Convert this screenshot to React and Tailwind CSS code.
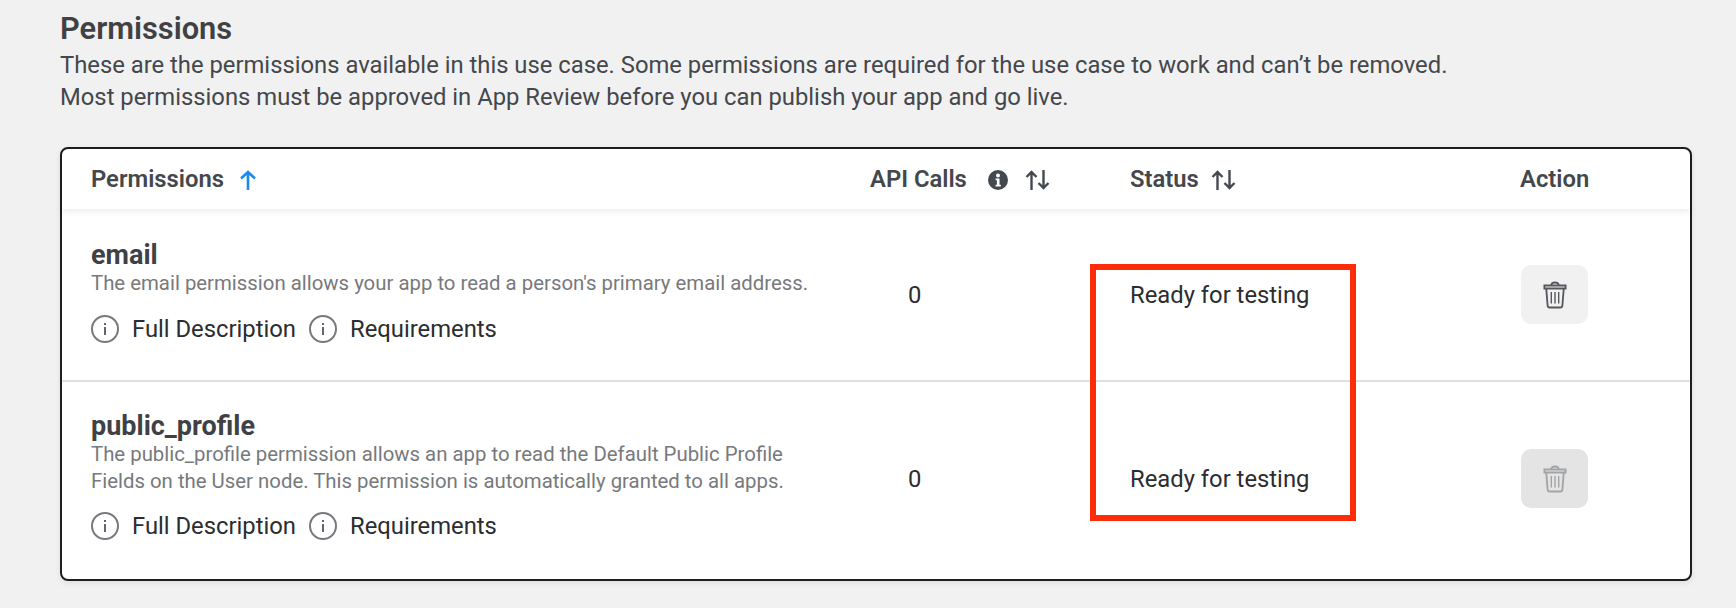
import React from "react";

const font = { fontFamily: "Roboto, sans-serif" };

function InfoOutline() {
  return (
    <svg width="28" height="28" viewBox="0 0 28 28" fill="none" className="shrink-0">
      <circle cx="14" cy="14" r="13" stroke="#77797c" strokeWidth="2" />
      <rect x="13" y="12" width="2" height="8" fill="#606770" />
      <rect x="13" y="8" width="2" height="2" fill="#606770" />
    </svg>
  );
}

function InfoFilled() {
  return (
    <svg width="20" height="20" viewBox="0 0 20 20">
      <circle cx="10" cy="10" r="10" fill="#444950" />
      <circle cx="10" cy="5.4" r="2" fill="#fff" />
      <path d="M7.6 8.6h3.9v6.2h1.3v1.6H7.6v-1.6h1.3v-4.6H7.6z" fill="#fff" />
    </svg>
  );
}

function SortArrows() {
  return (
    <svg width="25" height="22" viewBox="0 0 25 22" fill="none" stroke="#444950" strokeWidth="2.4">
      <path d="M6.500 21V3M1.500 8 6.500 3l5 5" />
      <path d="M18.500 1v18M13.500 14l5 5 5-5" />
    </svg>
  );
}

function ArrowUp() {
  return (
    <svg width="20" height="22" viewBox="0 0 20 22" fill="none" stroke="#1b8af0" strokeWidth="2.6">
      <path d="M10 21V3M3 9.500 10 3l7 6.500" />
    </svg>
  );
}

function Trash({ color }) {
  return (
    <svg width="24" height="28" viewBox="0 0 26 28" preserveAspectRatio="none" fill="none" stroke={color} strokeWidth="2">
      <path d="M9 4.500C9 2.500 10 1.500 13 1.500s4 1 4 3" />
      <path d="M1.500 4.500h23v3h-23z" />
      <path d="M3.500 7.500 5 24.500c.1 1.200 1 2 2.200 2h11.600c1.200 0 2.100-.8 2.200-2l1.500-17" />
      <path d="M9 11v11.500M13 11v11.500M17 11v11.500" strokeWidth="1.500" />
    </svg>
  );
}

function Link({ children }) {
  return (
    <span className="flex items-center gap-[13px]">
      <InfoOutline />
      <span>{children}</span>
    </span>
  );
}

function Row({ name, desc, btn, trash, rowClass }) {
  return (
    <div className={`grid grid-cols-[779px_260px_390px_1fr] items-center pl-[29px] ${rowClass}`}>
      <div className="pb-[5px]">
        <div className="text-[27px] leading-[30px] font-bold text-[#3f4145]">{name}</div>
        <div className="text-[20.370px] leading-[26.500px] text-[#77797c]">
          {desc.map((line) => (
            <div key={line}>{line}</div>
          ))}
        </div>
        <div className="flex gap-[13px] mt-[17px] text-[23.800px] leading-[30px] text-[#2b2d30]">
          <Link>Full Description</Link>
          <Link>Requirements</Link>
        </div>
      </div>
      <div className="text-[23.800px] pl-[38px] pt-[2px] text-[#2b2d30]">0</div>
      <div className="text-[23.800px] pt-[2px] text-[#2b2d30]">Ready for testing</div>
      <div className="pl-[1px]">
        <div className={`w-[67px] h-[59px] rounded-[10px] flex items-center justify-center ${btn}`}>
          <Trash color={trash} />
        </div>
      </div>
    </div>
  );
}

export default function App() {
  return (
    <div className="relative w-[1736px] h-[608px] overflow-hidden bg-[#f1f1f1] pt-[10px] pl-[60px]" style={font}>
      <h2 className="text-[30.800px] leading-[38px] font-semibold text-[#3f4145]">Permissions</h2>
      <p className="text-[23.800px] leading-[32px] text-[#44474b] mt-[1px]">
        These are the permissions available in this use case. Some permissions are required for the use case to work and can’t be removed.
        <br />
        Most permissions must be approved in App Review before you can publish your app and go live.
      </p>
      <div className="w-[1632px] h-[434px] mt-[34px] rounded-[8px] border-2 border-[#1c1e21] bg-white shadow-[0_2px_6px_rgba(0,0,0,0.08)]">
        <div className="grid grid-cols-[779px_260px_390px_1fr] items-center h-[60px] pl-[29px] pt-[2px] text-[23.800px] font-semibold text-[#44474b] shadow-[0_3px_6px_rgba(0,0,0,0.07)]">
          <div className="flex items-center gap-[14px]">
            Permissions
            <ArrowUp />
          </div>
          <div className="flex items-center">
            API Calls
            <span className="ml-[21px]"><InfoFilled /></span>
            <span className="ml-[17px]"><SortArrows /></span>
          </div>
          <div className="flex items-center gap-[12px]">
            Status
            <SortArrows />
          </div>
          <div>Action</div>
        </div>
        <Row
          name="email"
          desc={["The email permission allows your app to read a person's primary email address."]}
          btn="bg-[#f1f1f1]"
          trash="#55585c"
          rowClass="h-[173px] border-b-2 border-[#dfdfdf]"
        />
        <Row
          name="public_profile"
          desc={[
            "The public_profile permission allows an app to read the Default Public Profile",
            "Fields on the User node. This permission is automatically granted to all apps.",
          ]}
          btn="bg-[#e4e4e4]"
          trash="#a2a4a6"
          rowClass="h-[197px] pb-[4px]"
        />
      </div>
      <div className="absolute left-[1090px] top-[264px] w-[266px] h-[257px] border-[6px] border-[#ff2d07]" />
    </div>
  );
}
